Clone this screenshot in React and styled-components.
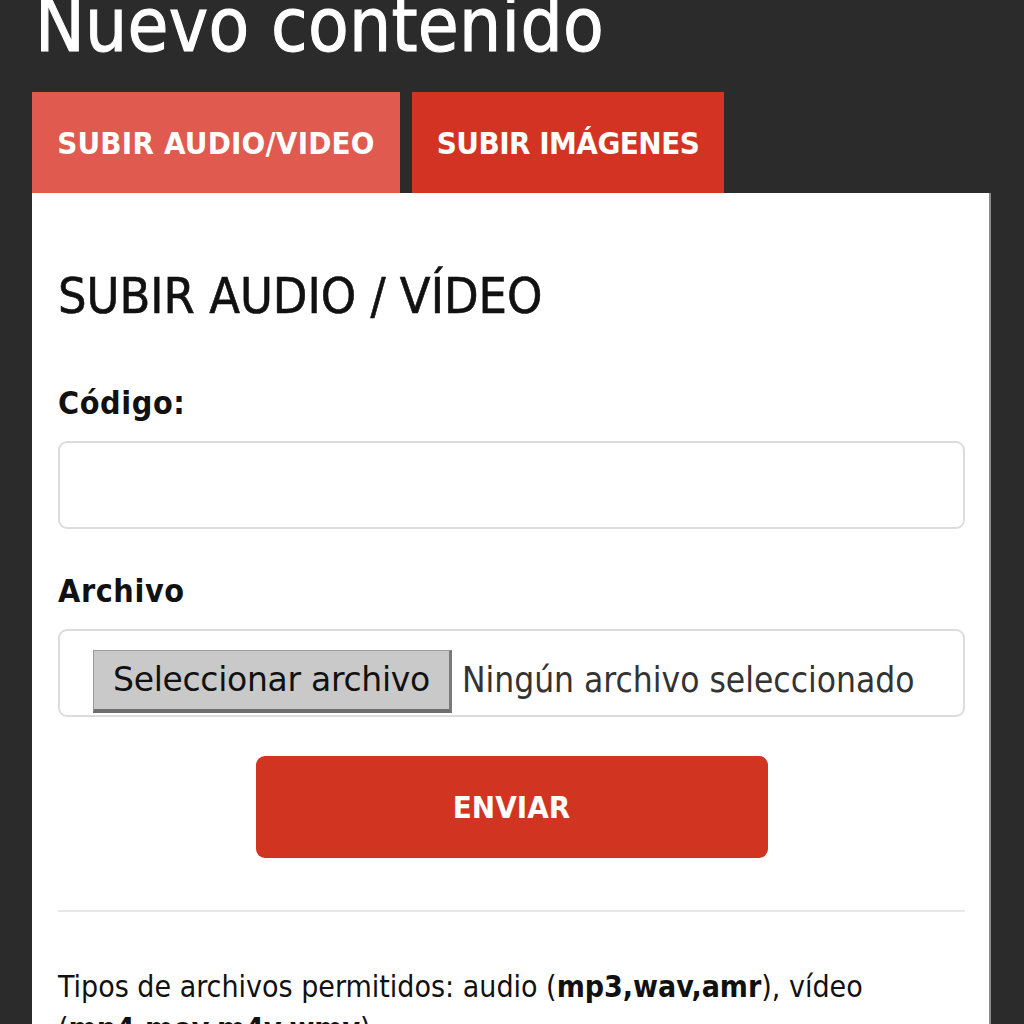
import React from 'react'
import styled, { createGlobalStyle } from 'styled-components'

const GlobalStyle = createGlobalStyle`
  html, body {
    margin: 0;
    padding: 0;
    background: #2b2b2b;
    overflow: hidden;
  }
  body {
    font-family: "DejaVu Sans Condensed", "DejaVu Sans", sans-serif;
  }
`

export default function App() {
  return (
    <>
      <GlobalStyle />
      <Page>
        <Title>Nuevo contenido</Title>
        <Tabs>
          <Tab active width={368}>SUBIR AUDIO/VIDEO</Tab>
          <Tab width={312}>SUBIR IMÁGENES</Tab>
        </Tabs>
        <Panel>
          <Heading>SUBIR AUDIO / VÍDEO</Heading>
          <Label>Código:</Label>
          <Field />
          <Label>Archivo</Label>
          <FileBox>
            <FileButton>Seleccionar archivo</FileButton>
            <FileName>Ningún archivo seleccionado</FileName>
          </FileBox>
          <Submit>ENVIAR</Submit>
          <Rule />
          <Note>
            Tipos de archivos permitidos: audio (<b>mp3,wav,amr</b>), vídeo
            (<b>mp4,mov,m4v,wmv</b>)
          </Note>
        </Panel>
      </Page>
    </>
  )
}

const Page = styled.div`
  padding: 0 33px 0 32px;
`

const Title = styled.h1`
  margin: -20px 0 0 3px;
  height: 112px;
  font-size: 74px;
  font-weight: normal;
  line-height: 90px;
  color: #fff;
  letter-spacing: 0.3px;
  -webkit-text-stroke: 1px #fff;
`

const Tabs = styled.div`
  display: flex;
  gap: 12px;
`

const Tab = styled.div`
  width: ${p => p.width}px;
  height: 101px;
  display: flex;
  align-items: center;
  justify-content: center;
  background: ${p => (p.active ? '#e05a50' : '#d23322')};
  color: #fff;
  font-size: 31px;
  font-weight: bold;
  letter-spacing: ${p => (p.active ? '0.2px' : '-0.5px')};
`

const Panel = styled.div`
  background: #fff;
  border-right: 2px solid #8a8a8a;
  padding: 70px 24px 40px 26px;
  min-height: 900px;
`

const Heading = styled.h2`
  margin: 0 0 54px;
  font-size: 50px;
  font-weight: normal;
  line-height: 66px;
  color: #111;
  -webkit-text-stroke: 0.6px #111;
`

const Label = styled.div`
  font-size: 32px;
  font-weight: bold;
  letter-spacing: 0.6px;
  color: #111;
  line-height: 40px;
  margin-bottom: 18px;
`

const Field = styled.div`
  height: 84px;
  border: 2px solid #dcdcdc;
  border-radius: 9px;
  margin-bottom: 42px;
`

const FileBox = styled.div`
  height: 84px;
  border: 2px solid #dcdcdc;
  border-radius: 9px;
  display: flex;
  align-items: center;
  padding: 0 0 0 33px;
  gap: 10px;
`

const FileButton = styled.div`
  height: 58px;
  margin-top: 16px;
  padding: 0 19px;
  display: flex;
  align-items: center;
  background: #c9c9c9;
  border: 1px solid #9a9a9a;
  border-bottom: 4px solid #6e6e6e;
  border-right: 3px solid #7a7a7a;
  font-family: "DejaVu Sans", sans-serif;
  font-size: 33px;
  letter-spacing: -0.3px;
  color: #111;
`

const FileName = styled.span`
  font-size: 35px;
  color: #333;
  margin-top: 14px;
`

const Submit = styled.div`
  width: 512px;
  height: 102px;
  margin: 39px auto 52px;
  border-radius: 9px;
  background: #d23422;
  color: #fff;
  font-size: 31px;
  font-weight: bold;
  display: flex;
  align-items: center;
  justify-content: center;
`

const Rule = styled.div`
  height: 2px;
  background: #e8e8e8;
  margin-bottom: 54px;
`

const Note = styled.p`
  margin: 0;
  font-size: 30px;
  line-height: 42px;
  color: #111;
  b {
    font-weight: bold;
  }
`
